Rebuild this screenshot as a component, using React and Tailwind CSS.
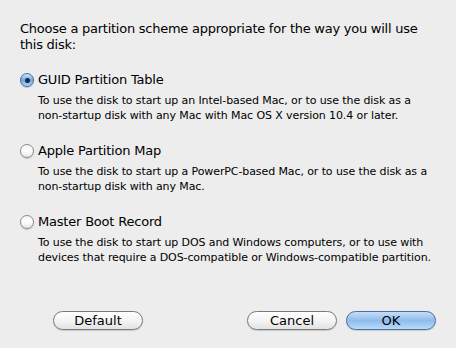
import React from "react";

const options = [
  {
    label: "GUID Partition Table",
    lines: [
      "To use the disk to start up an Intel-based Mac, or to use the disk as a",
      "non-startup disk with any Mac with Mac OS X version 10.4 or later.",
    ],
    checked: true,
  },
  {
    label: "Apple Partition Map",
    lines: [
      "To use the disk to start up a PowerPC-based Mac, or to use the disk as a",
      "non-startup disk with any Mac.",
    ],
  },
  {
    label: "Master Boot Record",
    lines: [
      "To use the disk to start up DOS and Windows computers, or to use with",
      "devices that require a DOS-compatible or Windows-compatible partition.",
    ],
  },
];

function Radio({ checked }) {
  if (checked) {
    return (
      <span className="w-[14px] h-[14px] rounded-full border border-[#3f6fa8] bg-gradient-to-b from-[#d2e6fa] via-[#6ca8e6] to-[#a9d4f8] flex items-center justify-center shadow-[0_1px_1px_rgba(0,0,0,0.2)]">
        <span className="w-[5px] h-[5px] rounded-full bg-[#1c2a3a]" />
      </span>
    );
  }
  return (
    <span className="w-[14px] h-[14px] rounded-full border border-[#8a8a8a] bg-gradient-to-b from-[#f4f4f4] via-[#ffffff] to-[#e6e6e6] shadow-[0_1px_1px_rgba(0,0,0,0.15)]" />
  );
}

function Button({ children, primary }) {
  const base =
    "w-[90px] h-[19px] rounded-full border text-[13px] leading-none flex items-center justify-center text-black shadow-[0_1px_1px_rgba(0,0,0,0.15)]";
  const look = primary
    ? "border-[#4d6f9c] bg-gradient-to-b from-[#c6def6] via-[#8ebcec] to-[#b8dbfa]"
    : "border-[#7a7a7a] bg-gradient-to-b from-[#ffffff] via-[#f4f4f4] to-[#e2e2e2]";
  return <div className={`${base} ${look}`}>{children}</div>;
}

export default function App() {
  return (
    <div
      className="w-[456px] h-[348px] bg-[#ededed] text-black flex flex-col overflow-hidden"
      style={{ fontFamily: '"DejaVu Sans", "Liberation Sans", sans-serif' }}
    >
      <div className="pl-[20px] pt-[21px]">
        <p className="text-[13px] leading-[16px] tracking-[-0.25px]">
          Choose a partition scheme appropriate for the way you will use
          <br />
          this disk:
        </p>

        <div className="mt-[19px] flex flex-col gap-[20px]">
          {options.map((o) => (
            <div key={o.label}>
              <div className="flex items-center gap-[4px] h-[16px]">
                <Radio checked={o.checked} />
                <span className="text-[13px] leading-[16px] tracking-[-0.2px]">
                  {o.label}
                </span>
              </div>
              <div className="pl-[18px] mt-[5px] text-[11px] leading-[15px] tracking-[-0.1px]">
                {o.lines.map((l) => (
                  <div key={l}>{l}</div>
                ))}
              </div>
            </div>
          ))}
        </div>
      </div>

      {/* buttons */}
      <div className="mt-auto mb-[18px] flex pl-[53px] pr-[20px]">
        <Button>Default</Button>
        <div className="ml-auto flex gap-[9px]">
          <Button>Cancel</Button>
          <Button primary>OK</Button>
        </div>
      </div>
    </div>
  );
}
